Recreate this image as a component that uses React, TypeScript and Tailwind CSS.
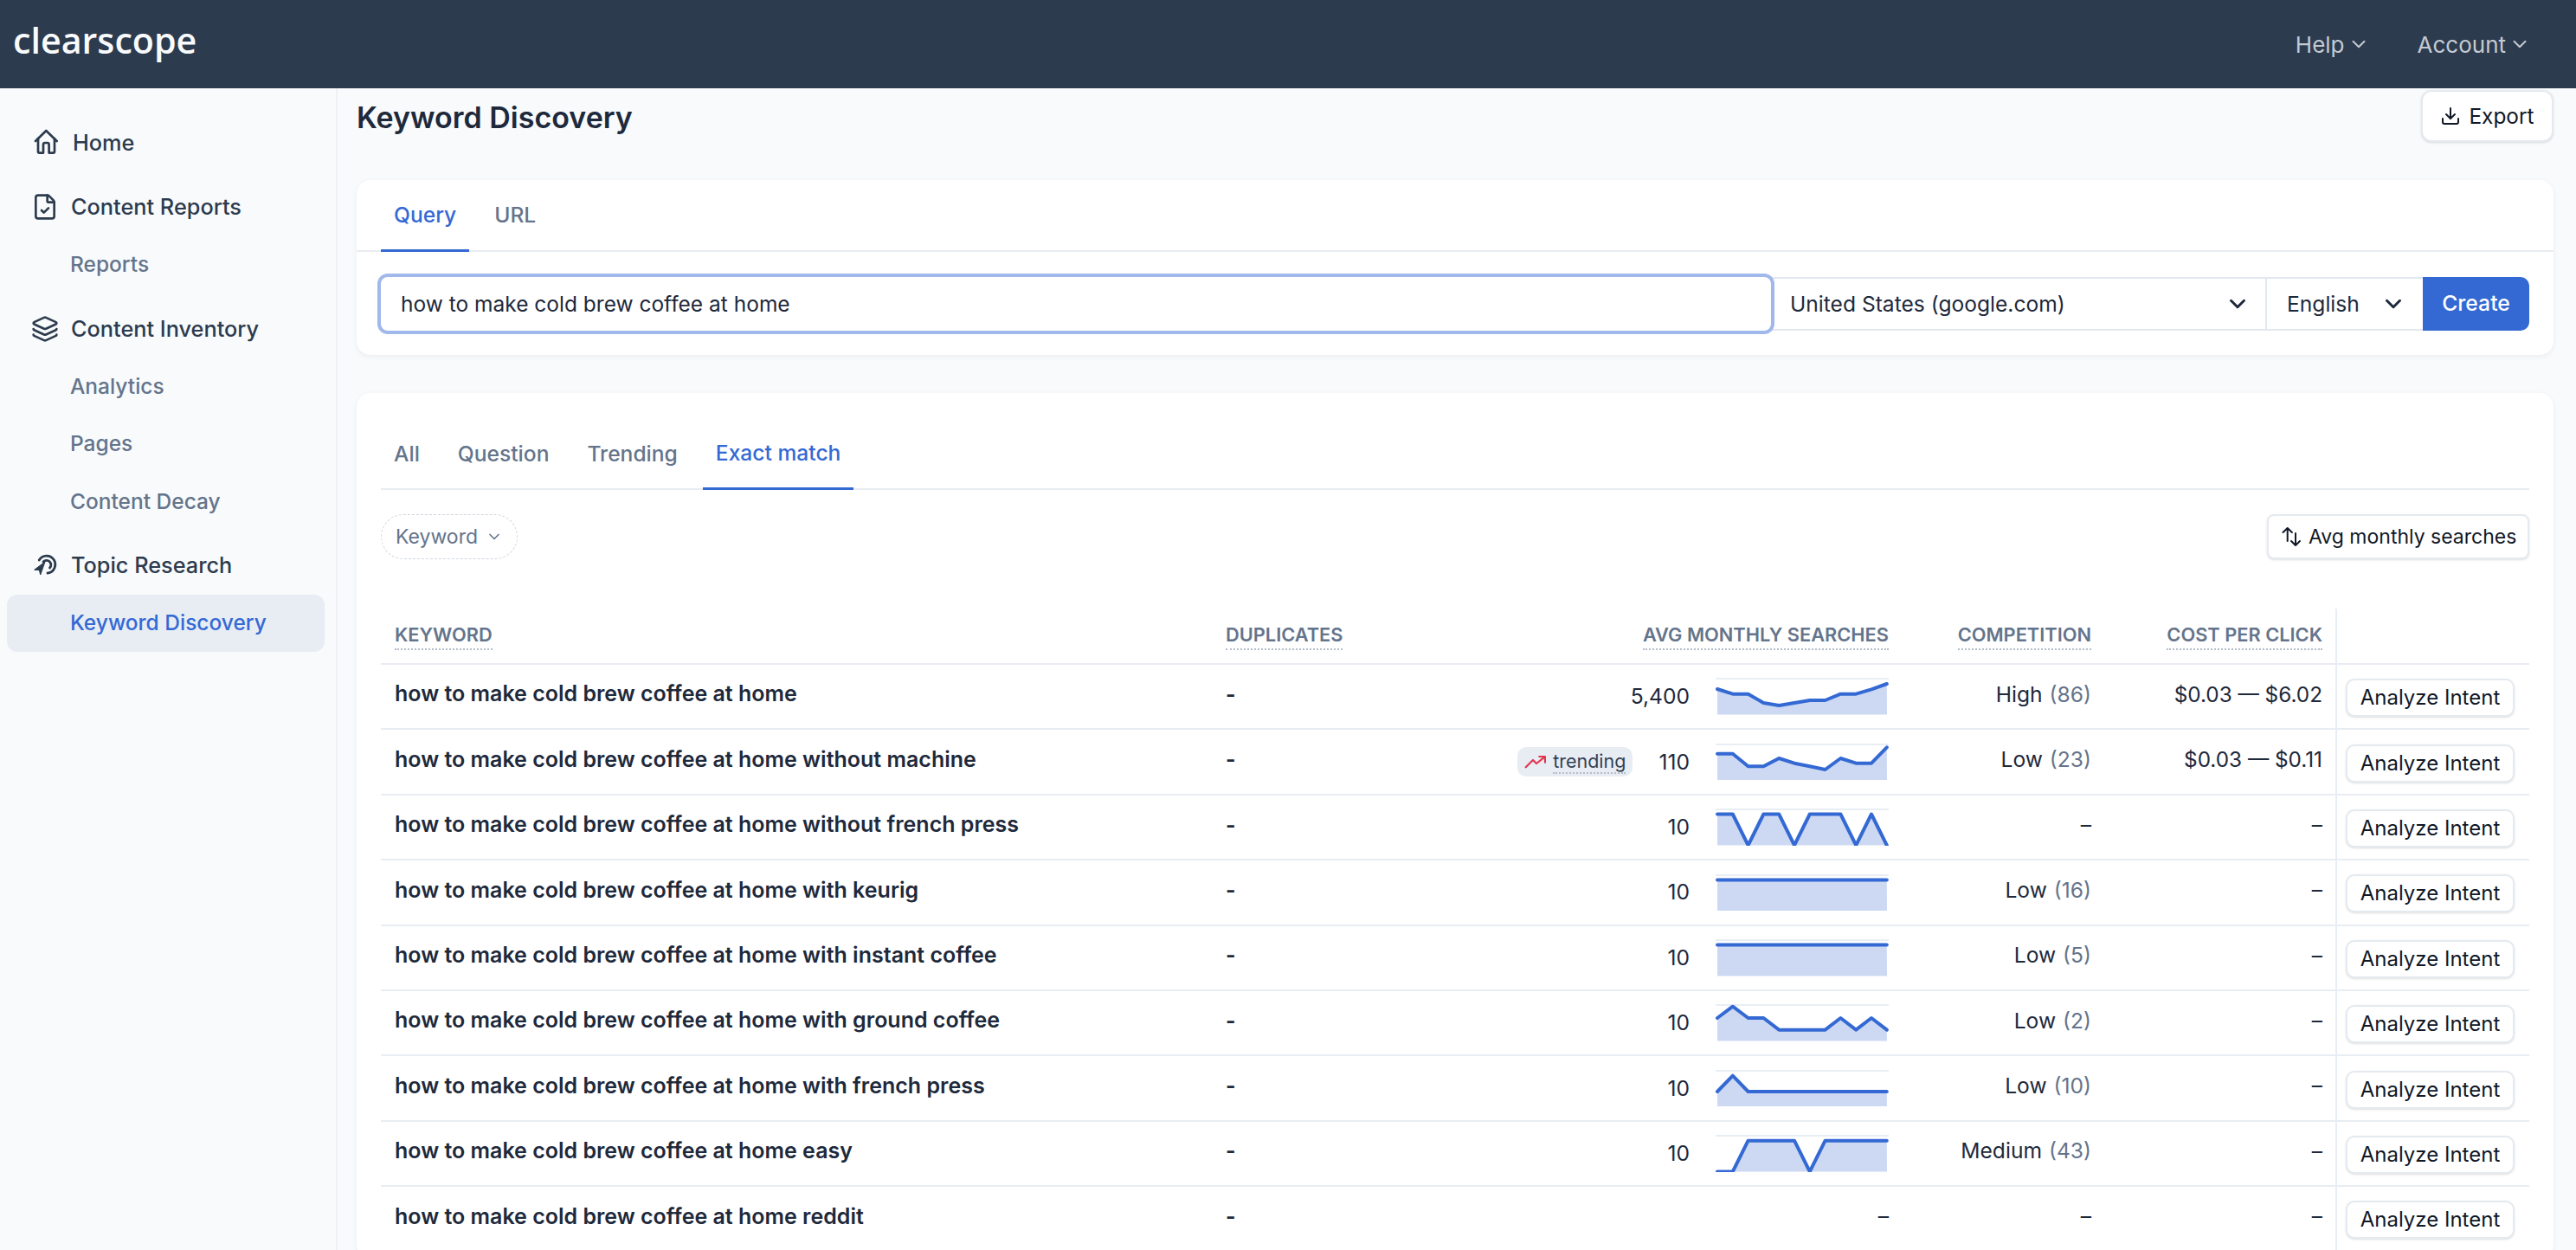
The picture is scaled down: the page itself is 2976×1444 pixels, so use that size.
import { ChevronDown, FileCheck, Layers, Download } from "lucide-react";

const rows = [
  { keyword: "how to make cold brew coffee at home", volume: "5,400", level: "High", score: "(86)", cost: "$0.03 — $6.02", points: [13, 18.7, 18.7, 29, 32, 29, 26, 26, 18.7, 18.7, 13.3, 7] },
  { keyword: "how to make cold brew coffee at home without machine", volume: "110", trending: true, level: "Low", score: "(23)", cost: "$0.03 — $0.11", points: [11.7, 11.7, 26.3, 26.3, 17, 22.7, 26.3, 30, 17, 22.7, 22.7, 4.3] },
  { keyword: "how to make cold brew coffee at home without french press", volume: "10", level: "–", score: "", cost: "–", points: [6.5, 6.5, 42.5, 6.5, 6.5, 42.5, 6.5, 6.5, 6.5, 42.5, 6.5, 42.5] },
  { keyword: "how to make cold brew coffee at home with keurig", volume: "10", level: "Low", score: "(16)", cost: "–", points: [6.5, 6.5, 6.5, 6.5, 6.5, 6.5, 6.5, 6.5, 6.5, 6.5, 6.5, 6.5] },
  { keyword: "how to make cold brew coffee at home with instant coffee", volume: "10", level: "Low", score: "(5)", cost: "–", points: [6.5, 6.5, 6.5, 6.5, 6.5, 6.5, 6.5, 6.5, 6.5, 6.5, 6.5, 6.5] },
  { keyword: "how to make cold brew coffee at home with ground coffee", volume: "10", level: "Low", score: "(2)", cost: "–", points: [16, 2.7, 16, 16, 29.7, 29.7, 29.7, 29.7, 16, 29.7, 16, 29.7] },
  { keyword: "how to make cold brew coffee at home with french press", volume: "10", level: "Low", score: "(10)", cost: "–", points: [25, 6.7, 25, 25, 25, 25, 25, 25, 25, 25, 25, 25] },
  { keyword: "how to make cold brew coffee at home easy", volume: "10", level: "Medium", score: "(43)", cost: "–", points: [42.5, 42.5, 6.7, 6.7, 6.7, 6.7, 42.5, 6.7, 6.7, 6.7, 6.7, 6.7] },
  { keyword: "how to make cold brew coffee at home reddit", volume: "–", level: "–", score: "", cost: "–" },
];

const gridCols = "grid grid-cols-[960px_300px_498px_234px_266px_224px]";

function Sparkline({ points }: { points: number[] }) {
  const coords = points.map((y, i) => `${2 + i * 17.8},${y}`).join(" ");
  return (
    <svg width="200" height="42.5" viewBox="0 0 200 42.5" className="shrink-0">
      <rect x="0" y="0" width="200" height="2" fill="#e9eef4" />
      <polygon points={`2,42.5 ${coords} 198,42.5`} fill="#cdd9f3" />
      <polyline points={coords} fill="none" stroke="#3469d4" strokeWidth="4" strokeLinejoin="round" strokeLinecap="round" />
    </svg>
  );
}

function HomeIcon() {
  return (
    <svg width="32" height="32" viewBox="0 0 32 32" fill="none" stroke="#2d3b4e" strokeWidth="2.7" strokeLinecap="round" strokeLinejoin="round" className="shrink-0">
      <path d="M5 14 17.3 2l12.4 12" />
      <path d="M8 11v15a1.6 1.6 0 0 0 1.6 1.6H14V18a2 2 0 0 1 2-2h2.6a2 2 0 0 1 2 2v9.6h4.8A1.6 1.6 0 0 0 27 26V11" />
    </svg>
  );
}

function TargetIcon() {
  return (
    <svg width="32" height="32" viewBox="0 0 32 32" fill="none" stroke="#2d3b4e" strokeWidth="2.8" strokeLinecap="round" className="shrink-0">
      <path d="M9.2 10A10 10 0 1 1 19 25" />
      <path d="M14 12A5 5 0 1 1 21.5 19" />
      <path d="M4 21 16 12l-5.3 15-1.2-5z" fill="#2d3b4e" strokeWidth="1" strokeLinejoin="round" />
    </svg>
  );
}

function TrendIcon() {
  return (
    <svg width="25" height="18" viewBox="0 0 25 18" fill="none" stroke="#e2364f" strokeWidth="2.2" strokeLinecap="round" strokeLinejoin="round" className="shrink-0">
      <path d="M1.7 15.3 10 7l4 4 9.3-7.3" />
      <path d="M17.3 3H24v6.7" />
    </svg>
  );
}

function SortIcon() {
  return (
    <svg width="24" height="24" viewBox="0 0 24 24" fill="none" stroke="#111827" strokeWidth="2" strokeLinecap="round" strokeLinejoin="round" className="shrink-0">
      <path d="M7.7 2v15M2.5 7l5.2-5 5.2 5" />
      <path d="M17 8v14M12 17l5 5 5-5" />
    </svg>
  );
}

function NavHead({ icon, label, className }: { icon: React.ReactNode; label: string; className?: string }) {
  return (
    <div className={`flex h-[66.5px] items-center gap-[14px] pl-[28px] text-[25.3px] font-medium text-[#2d3b4e] ${className ?? ""}`}>
      {icon}
      <span>{label}</span>
    </div>
  );
}

function NavSub({ label, active }: { label: string; active?: boolean }) {
  return (
    <div className={`flex h-[66.5px] items-center rounded-[12px] pl-[73px] text-[24.5px] font-medium ${active ? "bg-[#e8edf4] text-[#3469d4]" : "text-[#64748b]"}`}>
      {label}
    </div>
  );
}

function HeadCell({ label, right, className }: { label: string; right?: boolean; className?: string }) {
  return (
    <div className={`flex items-center px-[16px] ${right ? "justify-end" : ""} ${className ?? ""}`}>
      <span className="border-b-2 border-dotted border-[#b4bdc9] pb-[1px] text-[21.8px] font-semibold leading-[30px] text-[#64748b]">{label}</span>
    </div>
  );
}

export default function App() {
  return (
    <div className="flex h-[1444px] w-full flex-col overflow-hidden bg-[#f8fafc] text-[#1e293b] [font-family:Inter,sans-serif]">
      <header className="flex h-[102px] shrink-0 items-center justify-between bg-[#2d3b4e] pl-[15px] pr-[52px]">
        <div className="pb-[8px] text-[41.2px] font-semibold text-[#f8fafc] [font-family:'Open_Sans',sans-serif]">clearscope</div>
        <div className="flex items-center gap-[55px] text-[26px] text-[#c3cad3]">
          <div className="flex items-center gap-[3px]">
            Help
            <ChevronDown size={26} strokeWidth={1.8} />
          </div>
          <div className="flex items-center gap-[3px]">
            Account
            <ChevronDown size={26} strokeWidth={1.8} />
          </div>
        </div>
      </header>

      <div className="flex min-h-0 flex-1">
        <aside className="w-[390px] shrink-0 border-r-2 border-[#edf1f5] pl-[8px] pr-[13px] pt-[30px]">
          <div className="space-y-[7.5px]">
            <NavHead icon={<HomeIcon />} label="Home" className="[&>span]:ml-[2px]" />
            <div>
              <NavHead icon={<FileCheck size={32} color="#2d3b4e" />} label="Content Reports" />
              <NavSub label="Reports" />
            </div>
            <div>
              <NavHead icon={<Layers size={32} color="#2d3b4e" />} label="Content Inventory" />
              <NavSub label="Analytics" />
              <NavSub label="Pages" />
              <NavSub label="Content Decay" />
            </div>
            <div>
              <NavHead icon={<TargetIcon />} label="Topic Research" />
              <NavSub label="Keyword Discovery" active />
            </div>
          </div>
        </aside>

        <main className="min-w-0 flex-1 pl-[22px] pr-[26px]">
          <div className="mt-[2px] flex h-[60px] items-center justify-between">
            <h1 className="pt-[2px] text-[34px] font-semibold text-[#1e293b]">Keyword Discovery</h1>
            <button className="flex h-[60px] w-[153px] items-center justify-center gap-[9px] rounded-[12px] border-2 border-[#e5eaf0] bg-white text-[24.4px] text-[#111827] shadow-sm">
              <Download size={24} strokeWidth={2} />
              Export
            </button>
          </div>

          <section className="mt-[44px] h-[202px] rounded-[16px] bg-white shadow-[0_2px_6px_rgba(15,23,42,0.06)]">
            <div className="flex h-[83px] gap-[14px] border-b-2 border-[#e8edf3] px-[28px] text-[24.6px] font-medium">
              <div className="-mb-[2px] flex items-center border-b-[3px] border-[#3469d4] px-[15px] text-[#3469d4]">Query</div>
              <div className="flex items-center px-[15px] text-[#64748b]">URL</div>
            </div>
            <div className="mt-[29px] flex h-[62px] px-[28px] text-[24.6px]">
              <input
                readOnly
                defaultValue="how to make cold brew coffee at home"
                className="z-10 min-w-0 flex-1 rounded-[8px] bg-white pl-[23px] text-[24.5px] text-[#1e293b] outline-none ring-4 ring-[#a0b8eb]"
              />
              <div className="flex w-[573px] items-center justify-between border-y-2 border-r-2 border-[#e2e8f0] pl-[22px] pr-[17px]">
                United States (google.com)
                <ChevronDown size={30} strokeWidth={2.4} />
              </div>
              <div className="flex w-[180px] items-center justify-between border-y-2 border-[#e2e8f0] pl-[23px] pr-[19px]">
                English
                <ChevronDown size={30} strokeWidth={2.4} />
              </div>
              <button className="w-[123px] rounded-r-[10px] bg-[#3469d4] text-[24.7px] font-medium text-white">Create</button>
            </div>
          </section>

          <section className="mt-[44px] h-[1000px] rounded-[16px] bg-white px-[28px] pt-[28px] shadow-[0_2px_6px_rgba(15,23,42,0.06)]">
            <div className="flex h-[84px] gap-[14px] border-b-2 border-[#e8edf3] text-[24.6px] font-medium text-[#64748b]">
              <div className="flex items-center px-[15px] pt-[2px]">All</div>
              <div className="flex items-center px-[15px] pt-[2px]">Question</div>
              <div className="flex items-center px-[15px] pt-[2px]">Trending</div>
              <div className="-mb-[2px] flex items-center border-b-[3px] border-[#3469d4] px-[15px] pt-[2px] text-[#3469d4]">Exact match</div>
            </div>

            <div className="mt-[28px] flex h-[52px] items-center justify-between">
              <div className="flex h-[52px] items-center gap-[9px] rounded-full border-[1.5px] border-dashed border-[#cfd6df] pl-[16px] pr-[16px] text-[23px] text-[#64748b]">
                Keyword
                <ChevronDown size={20} strokeWidth={2} />
              </div>
              <button className="flex h-[52px] w-[303px] items-center gap-[8px] rounded-[8px] border-2 border-[#e5eaf0] bg-white pl-[14px] text-[23px] text-[#111827] shadow-sm">
                <SortIcon />
                Avg monthly searches
              </button>
            </div>

            <div className="mt-[57px]">
              <div className={`${gridCols} h-[65px] border-b-2 border-[#e8edf3]`}>
                <HeadCell label="KEYWORD" />
                <HeadCell label="DUPLICATES" />
                <HeadCell label="AVG MONTHLY SEARCHES" right />
                <HeadCell label="COMPETITION" right />
                <HeadCell label="COST PER CLICK" right className="pr-[15px]" />
                <div className="border-l-2 border-[#e8edf3]" />
              </div>
              {rows.map((row) => (
                <div key={row.keyword} className={`${gridCols} h-[75.4px] border-b-2 border-[#e8edf3] text-[24.6px]`}>
                  <div className="flex items-center px-[16px] pb-[5px] text-[25px] font-semibold text-[#1e293b]">{row.keyword}</div>
                  <div className="flex items-center px-[16px] pb-[5px] font-bold text-[#1e293b]">-</div>
                  <div className={`flex items-center justify-end gap-[30px] px-[16px] ${row.points ? "" : "pb-[4px]"}`}>
                    {row.trending && (
                      <span className="flex h-[34px] items-center gap-[8px] rounded-[10px] bg-[#e8edf4] px-[8px] text-[21.5px] text-[#334155]">
                        <TrendIcon />
                        <span className="border-b-2 border-dotted border-[#b4bdc9] leading-[26px]">trending</span>
                      </span>
                    )}
                    <span>{row.volume}</span>
                    {row.points && <Sparkline points={row.points} />}
                  </div>
                  <div className="flex items-center justify-end gap-[8px] px-[16px] pb-[5px]">
                    <span>{row.level}</span>
                    {row.score && <span className="text-[#64748b]">{row.score}</span>}
                  </div>
                  <div className="flex items-center justify-end pb-[5px] pl-[16px] pr-[15px] text-[24.3px]">{row.cost}</div>
                  <div className="flex items-center border-l-2 border-[#e8edf3] pl-[10px] pt-[3px]">
                    <button className="h-[44px] w-[195px] rounded-[10px] border-2 border-[#e5eaf0] bg-white text-[24px] text-[#111827] shadow-sm">Analyze Intent</button>
                  </div>
                </div>
              ))}
            </div>
          </section>
        </main>
      </div>
    </div>
  );
}
